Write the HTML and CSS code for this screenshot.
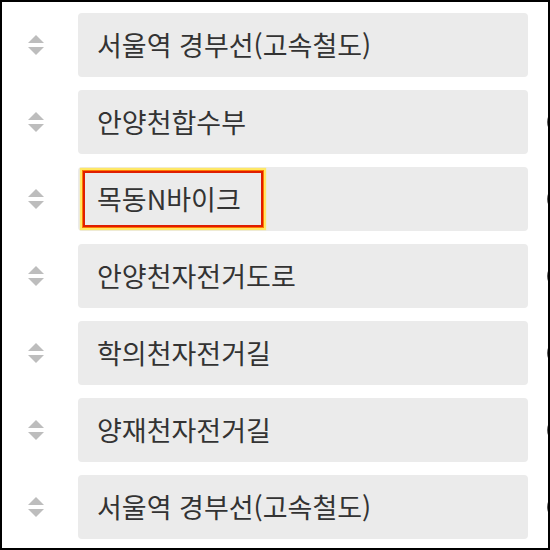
FILE: index.html
```html
<!DOCTYPE html>
<html lang="ko">
<head>
    <meta charset="UTF-8">
    <meta name="viewport" content="width=device-width, initial-scale=1.0">
    <title>경로 순서</title>
    <link rel="stylesheet" href="styles.css">
</head>
<body>
    <div class="frame">
        <ul class="route-list">
            <li class="route-row">
                <span class="handle"><svg width="18" height="22" viewBox="0 0 18 22"><path d="M9 1 L17 9 L1 9 Z M1 13 L17 13 L9 21 Z" fill="#bdbdbd"/></svg></span>
                <div class="route-box"><span class="label">서울역 경부선(고속철도)</span></div>
                <span class="radio first"></span>
            </li>
            <li class="route-row">
                <span class="handle"><svg width="18" height="22" viewBox="0 0 18 22"><path d="M9 1 L17 9 L1 9 Z M1 13 L17 13 L9 21 Z" fill="#bdbdbd"/></svg></span>
                <div class="route-box"><span class="label">안양천합수부</span></div>
                <span class="radio"></span>
            </li>
            <li class="route-row">
                <span class="handle"><svg width="18" height="22" viewBox="0 0 18 22"><path d="M9 1 L17 9 L1 9 Z M1 13 L17 13 L9 21 Z" fill="#bdbdbd"/></svg></span>
                <div class="route-box"><span class="label focused">목동N바이크</span></div>
                <span class="radio"></span>
            </li>
            <li class="route-row">
                <span class="handle"><svg width="18" height="22" viewBox="0 0 18 22"><path d="M9 1 L17 9 L1 9 Z M1 13 L17 13 L9 21 Z" fill="#bdbdbd"/></svg></span>
                <div class="route-box"><span class="label">안양천자전거도로</span></div>
                <span class="radio"></span>
            </li>
            <li class="route-row">
                <span class="handle"><svg width="18" height="22" viewBox="0 0 18 22"><path d="M9 1 L17 9 L1 9 Z M1 13 L17 13 L9 21 Z" fill="#bdbdbd"/></svg></span>
                <div class="route-box"><span class="label">학의천자전거길</span></div>
                <span class="radio"></span>
            </li>
            <li class="route-row">
                <span class="handle"><svg width="18" height="22" viewBox="0 0 18 22"><path d="M9 1 L17 9 L1 9 Z M1 13 L17 13 L9 21 Z" fill="#bdbdbd"/></svg></span>
                <div class="route-box"><span class="label">양재천자전거길</span></div>
                <span class="radio"></span>
            </li>
            <li class="route-row">
                <span class="handle"><svg width="18" height="22" viewBox="0 0 18 22"><path d="M9 1 L17 9 L1 9 Z M1 13 L17 13 L9 21 Z" fill="#bdbdbd"/></svg></span>
                <div class="route-box"><span class="label">서울역 경부선(고속철도)</span></div>
                <span class="radio"></span>
            </li>
        </ul>
    </div>
</body>
</html>
```

FILE: styles.css
```css
body {
    margin: 0;
    font-family: "Noto Sans CJK KR", "Noto Sans", sans-serif;
    background-color: #fff;
}
.frame {
    width: 550px;
    height: 550px;
    box-sizing: border-box;
    border: 2px solid #000;
    overflow: hidden;
}
.route-list {
    list-style: none;
    margin: 0;
    padding: 11px 0 0 0;
    display: flex;
    flex-direction: column;
    gap: 13px;
}
.route-row {
    display: flex;
    align-items: center;
    height: 64px;
}
.handle {
    width: 68px;
    display: flex;
    justify-content: center;
    flex-shrink: 0;
}
.route-box {
    width: 450px;
    height: 64px;
    flex-shrink: 0;
    margin-left: 8px;
    box-sizing: border-box;
    background-color: #ebebeb;
    border-radius: 4px;
    display: flex;
    align-items: center;
    padding-left: 5px;
}
.label {
    font-size: 27px;
    line-height: 36px;
    color: #333;
    padding: 8px 20px 8px 12px;
    border: 2px solid transparent;
    white-space: nowrap;
}
.label.focused {
    border-color: #e01e00;
    box-shadow: 0 0 0 1px #ff7a00, 0 0 1px 3px #ffe866;
}
.radio {
    width: 20px;
    height: 20px;
    flex-shrink: 0;
    margin-left: 19px;
    border: 2px solid #555;
    border-radius: 50%;
}
.radio.first {
    border-color: transparent;
}
```
